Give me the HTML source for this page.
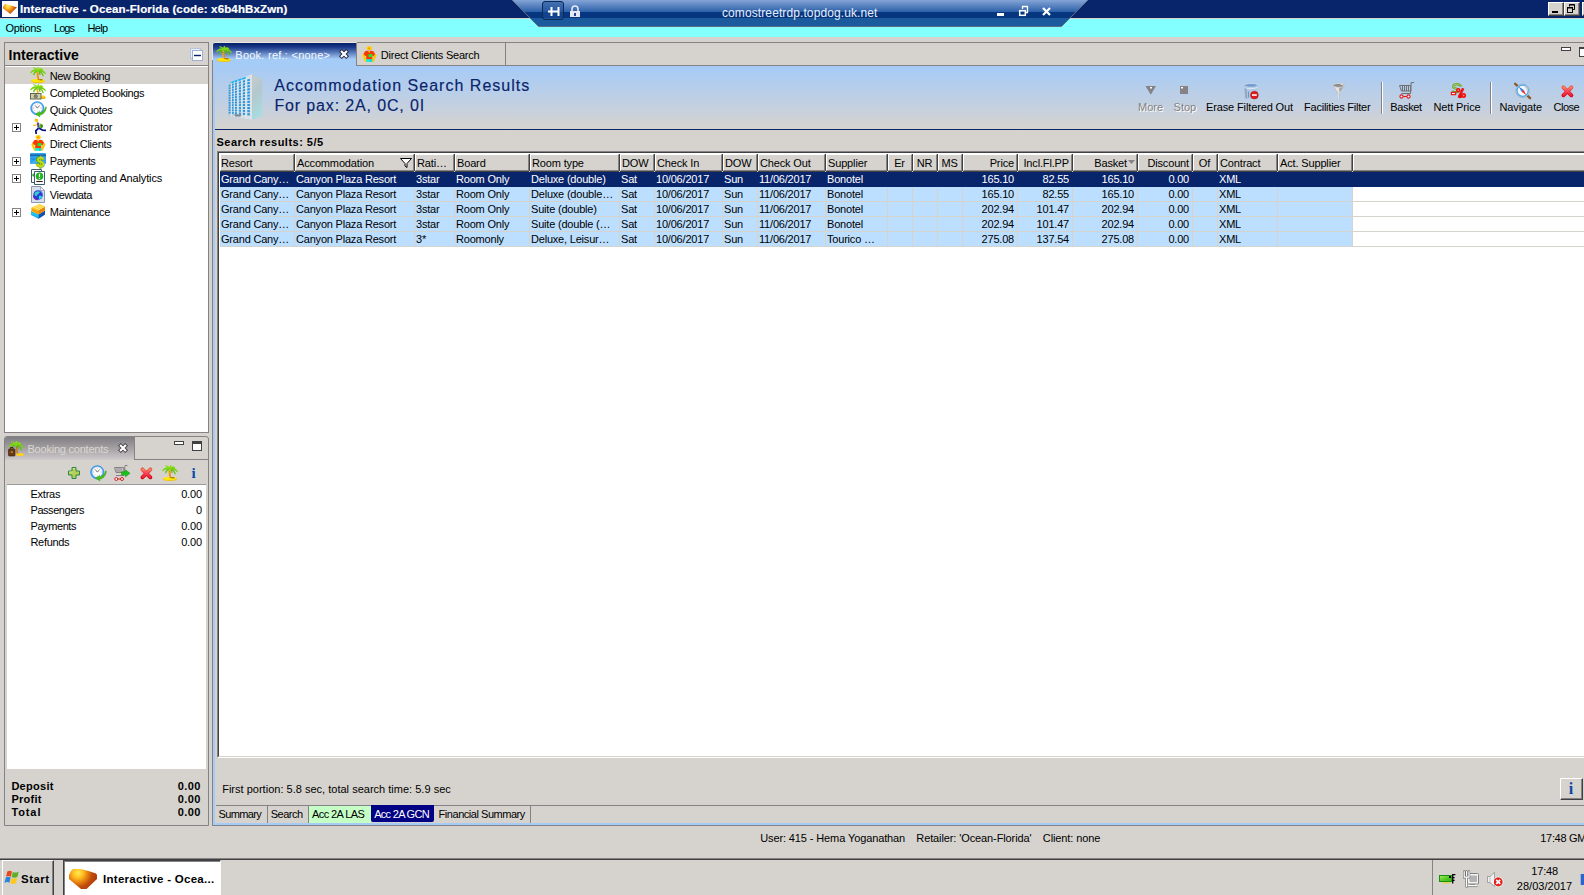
<!DOCTYPE html>
<html><head><meta charset="utf-8"><title>Interactive - Ocean-Florida</title>
<style>
*{box-sizing:border-box;margin:0;padding:0}
html,body{width:1584px;height:895px;overflow:hidden}
body{background:#D6D3CE;font:11px "Liberation Sans",sans-serif;color:#000;position:relative}
.a{position:absolute;white-space:pre}
.t{position:absolute;white-space:pre;line-height:13px;height:13px;letter-spacing:-0.15px}
.b{font-weight:bold}
svg{position:absolute;overflow:visible}
#title{left:0;top:0;width:1584px;height:18px;background:#08246B}
#menu{left:0;top:18px;width:1584px;height:19px;background:#84FFFF}
.wbtn{position:absolute;top:2px;width:16px;height:14px;background:#D6D3CE;border:1px solid;border-color:#fff #424142 #424142 #fff;box-shadow:inset -1px -1px 0 #848284}
.panel{position:absolute;border:1px solid #848284}
.hdr{position:absolute;top:154px;height:17px;background:#D6D3CE;border:1px solid;border-color:#fff #848284 #848284 #fff;box-shadow:1px 0 0 #424142, 0 1px 0 #424142;line-height:17px;padding:0 2px 0 1px;white-space:pre;overflow:hidden;letter-spacing:-0.15px}
.r{text-align:right}
.row{position:absolute;left:220px;height:15px;width:1133px;background:#BDDFFF}
.row span{position:absolute;top:0;height:15px;line-height:15px;white-space:pre;overflow:hidden;letter-spacing:-0.2px;border-right:1px solid #D6D3CE;border-bottom:1px solid #D6D3CE;padding:0 3px 0 1px}
.sel{background:#08246B;color:#fff;width:1364px}
.sel span{border-color:transparent}
</style></head><body>
<!-- ===== title bar ===== -->
<div id="title" class="a"></div>
<div id="menu" class="a"></div>
<div class="a" style="left:2px;top:1px;width:16px;height:16px;background:#fff"></div>
<svg style="left:2px;top:2px" width="16" height="14" viewBox="0 0 16 14"><defs><radialGradient id="lg1" cx="6" cy="4" r="9" gradientUnits="userSpaceOnUse"><stop offset="0" stop-color="#FFEC70"/><stop offset=".3" stop-color="#FFC028"/><stop offset=".6" stop-color="#E07C10"/><stop offset="1" stop-color="#B03C0C"/></radialGradient></defs><path d="M1 4.800L3 2L7 3L14.900 5.300L8.300 11.900L1.100 6.600Z" fill="url(#lg1)"/></svg>
<div class="wbtn" style="left:1548px"></div><div class="a" style="left:1552px;top:11px;width:6px;height:2px;background:#000"></div>
<div class="wbtn" style="left:1564px"></div><svg style="left:1567px;top:4px" width="9" height="10"><path d="M2.500 2.500V.5H7.500V5.500H6" fill="none" stroke="#000"/><path d="M2 1H8" stroke="#000" stroke-width="1"/><rect x=".5" y="3.500" width="5" height="5" fill="none" stroke="#000"/><path d="M0 4H6" stroke="#000" stroke-width="1"/></svg>
<div class="wbtn" style="left:1582px"></div>
<div class="a" style="left:0;top:18px;width:1584px;height:1px;background:#D6D3CE"></div>
<!-- ===== RDP connection bar ===== -->
<svg style="left:510px;top:0" width="580" height="28" viewBox="510 0 580 28">
<defs><linearGradient id="cb" x1="0" y1="0" x2="0" y2="1">
<stop offset="0" stop-color="#84A4D6"/><stop offset=".44" stop-color="#2E62AA"/><stop offset=".45" stop-color="#06367F"/><stop offset=".68" stop-color="#06367F"/><stop offset=".69" stop-color="#1B5A9C"/><stop offset="1" stop-color="#1B5A9C"/></linearGradient></defs>
<path d="M512 0 L1088 0 L1061.500 26.500 L538.500 26.500 Z" fill="url(#cb)"/>
<path d="M512 0 L538.500 26.500 L1061.500 26.500 L1088 0" fill="none" stroke="#5E6E84" stroke-width="1"/>
<rect x="542.5" y="1.5" width="21" height="18" rx="2.5" fill="#1D4F97" fill-opacity=".55" stroke="#0B2A55"/>
<path d="M548 11.5 H558 M551.5 7 V16 M558.5 7 V16" stroke="#fff" stroke-width="2" fill="none"/>
<path d="M572 11 V9 a3 3 0 0 1 6 0 V11" fill="none" stroke="#E8E8F4" stroke-width="1.6"/>
<rect x="570" y="11" width="10" height="6" fill="#E8E8F4"/><rect x="574" y="13" width="2" height="3" fill="#1B4A90"/>
<rect x="997" y="13" width="7" height="3" fill="#fff"/>
<path d="M1022.5 9 V6.500 H1027.5 V12.500 H1025" fill="none" stroke="#fff" stroke-width="1.3"/>
<rect x="1019.7" y="10.700" width="5.600" height="4.600" fill="none" stroke="#fff" stroke-width="1.500"/>
<path d="M1043 8 L1050 15 M1050 8 L1043 15" stroke="#fff" stroke-width="2.2" fill="none"/>
</svg>
<!-- ===== left top panel ===== -->
<div class="panel" style="left:4px;top:42px;width:205px;height:391px;background:#fff"></div>
<div class="a" style="left:5px;top:43px;width:203px;height:23px;background:#D6D3CE;border-bottom:1px solid #848284"></div>
<div class="a" style="left:5px;top:66px;width:203px;height:1px;background:#fff"></div>
<div class="a" style="left:5px;top:67px;width:203px;height:17px;background:#D6D3CE"></div>
<svg style="left:190px;top:48px" width="14" height="14"><rect x=".5" y=".5" width="10" height="10" fill="#E8EEF8" stroke="#B8C4DC"/><rect x="2.500" y="2.500" width="10" height="10" fill="#fff" stroke="#9CB0D0"/><path d="M4 7.500H11" stroke="#08246B" stroke-width="1.4"/></svg>
<svg style="left:12px;top:123px" width="9" height="9"><rect x=".5" y=".5" width="8" height="8" fill="#fff" stroke="#848284"/><path d="M2 4.500H7M4.500 2V7" stroke="#000"/></svg>
<svg style="left:12px;top:157px" width="9" height="9"><rect x=".5" y=".5" width="8" height="8" fill="#fff" stroke="#848284"/><path d="M2 4.500H7M4.500 2V7" stroke="#000"/></svg>
<svg style="left:12px;top:174px" width="9" height="9"><rect x=".5" y=".5" width="8" height="8" fill="#fff" stroke="#848284"/><path d="M2 4.500H7M4.500 2V7" stroke="#000"/></svg>
<svg style="left:12px;top:208px" width="9" height="9"><rect x=".5" y=".5" width="8" height="8" fill="#fff" stroke="#848284"/><path d="M2 4.500H7M4.500 2V7" stroke="#000"/></svg>
<!-- ===== booking contents panel ===== -->
<div class="panel" style="left:4px;top:436px;width:205px;height:390px;border-radius:3px 3px 0 0"></div>
<div class="a" style="left:5px;top:437px;width:130px;height:23px;border-radius:2px 0 0 0;background:linear-gradient(#7E7E82 0,#8E8C90 20%,#A8A4A8 55%,#C6C2C4 90%,#D0CCCC 100%);border-right:1px solid #848284"></div>
<div class="a" style="left:135px;top:459px;width:73px;height:1px;background:#848284"></div>
<svg style="left:118px;top:443px" width="10" height="10"><path d="M2.800 2.800L7.200 7.200M7.200 2.800L2.800 7.200" stroke="#424142" stroke-width="4" stroke-linecap="square"/><path d="M2.800 2.800L7.200 7.200M7.200 2.800L2.800 7.200" stroke="#fff" stroke-width="2.200" stroke-linecap="square"/></svg>
<svg style="left:174px;top:441px" width="30" height="12"><rect x=".5" y=".5" width="9" height="3" fill="#fff" stroke="#424142"/><rect x="18.500" y=".5" width="9" height="9" fill="#fff" stroke="#424142"/><path d="M18 2H28" stroke="#424142" stroke-width="2"/></svg>
<div class="a" style="left:7px;top:485px;width:199px;height:284px;background:#fff"></div>
<div class="a" style="left:5px;top:460px;width:2px;height:365px;background:#D6D3CE"></div>
<div class="a" style="left:7px;top:484px;width:199px;height:1px;background:#9C9A98"></div>
<!-- ===== main panel ===== -->
<div class="a" style="left:357px;top:42px;width:1227px;height:1px;background:#848284"></div>
<div class="a" style="left:212px;top:65px;width:1372px;height:1px;background:#848284"></div>
<div class="a" style="left:212px;top:60px;width:1px;height:766px;background:#848284"></div>
<div class="a" style="left:212px;top:825px;width:1372px;height:1px;background:#848284"></div>
<div class="a" style="left:213px;top:60px;width:2px;height:765px;background:#A5CBF7"></div>
<div class="a" style="left:213px;top:823px;width:1371px;height:2px;background:#A5CBF7"></div>
<!-- tabs -->
<div class="a" style="left:213px;top:43px;width:143px;height:23px;border-radius:2px 0 0 0;background:linear-gradient(#062068 0,#1C3A8A 18%,#A5CBF7 70%)"></div>
<div class="a" style="left:214px;top:42px;width:142px;height:1px;background:#E9E7E3"></div>
<div class="a" style="left:212px;top:44px;width:1px;height:16px;background:#E9E7E3"></div>
<div class="a" style="left:356px;top:43px;width:1px;height:22px;background:#848284"></div>
<div class="a" style="left:505px;top:43px;width:1px;height:22px;background:#848284"></div>
<svg style="left:339px;top:49px" width="10" height="10"><path d="M2.800 2.800L7.200 7.200M7.200 2.800L2.800 7.200" stroke="#202840" stroke-width="4" stroke-linecap="square"/><path d="M2.800 2.800L7.200 7.200M7.200 2.800L2.800 7.200" stroke="#fff" stroke-width="2.200" stroke-linecap="square"/></svg>
<svg style="left:1561px;top:47px" width="23" height="12"><rect x=".5" y=".5" width="9" height="3" fill="#fff" stroke="#424142"/><rect x="18.500" y=".5" width="9" height="9" fill="#fff" stroke="#424142"/><path d="M18 1.500H28" stroke="#424142"/></svg>
<!-- gradient header -->
<div class="a" style="left:215px;top:66px;width:1369px;height:63px;background:linear-gradient(#A5CBF7 0,#AECCF0 18%,#C2D0E2 60%,#D6D3CE 100%)"></div>
<div class="a" style="left:215px;top:129px;width:1369px;height:1px;background:#08246B"></div>
<!-- grid -->
<div class="a" style="left:217px;top:151px;width:1400px;height:607px;background:#fff;border:1px solid;border-color:#848284 #fff #fff #848284"></div>
<div class="a" style="left:218px;top:152px;width:1400px;height:605px;border:1px solid;border-color:#424142 #D6D3CE #D6D3CE #424142"></div>
<div class="a" style="left:220px;top:154px;width:1364px;height:18px;background:#D6D3CE"></div>
<div class="a" style="left:1560px;top:778px;width:23px;height:22px;background:#D6D3CE;border:1px solid;border-color:#fff #424142 #424142 #fff;box-shadow:inset -1px -1px 0 #848284"></div>
<div class="a b" style="left:1568.700px;top:779px;font:bold 16px/19px 'Liberation Serif',serif;color:#0848A8">i</div>
<!-- bottom tabs -->
<div class="a" style="left:216px;top:805px;width:1368px;height:1px;background:#848284"></div>
<div class="a" style="left:267px;top:806px;width:1px;height:17px;background:#848284"></div>
<div class="a" style="left:308px;top:806px;width:1px;height:17px;background:#848284"></div>
<div class="a" style="left:309px;top:806px;width:62px;height:17px;background:#C6FFC6"></div>
<div class="a" style="left:371px;top:805px;width:63px;height:17px;background:#000084;border-radius:0 0 2px 2px"></div>
<div class="a" style="left:530px;top:806px;width:1px;height:17px;background:#848284"></div>
<!-- status -->
<!-- taskbar -->
<div class="a" style="left:0;top:858px;width:1584px;height:1px;background:#848284"></div>
<div class="a" style="left:0;top:859px;width:1584px;height:1px;background:#424142"></div>
<div class="a" style="left:2px;top:860px;width:52px;height:40px;border:1px solid;border-color:#fff #424142 #424142 #fff;box-shadow:inset -1px 0 0 #848284"></div>
<div class="a" style="left:63px;top:860px;width:158px;height:40px;background:#fff;border:1px solid;border-color:#424142 #fff #fff #424142;box-shadow:inset 1px 1px 0 #848284"></div>
<div class="a" style="left:1432px;top:860px;width:1px;height:35px;background:#848284"></div>
<!-- ===== table ===== -->
<div class="hdr" style="left:220px;width:74px;padding-left:0">Resort</div>
<div class="hdr" style="left:295px;width:119px">Accommodation</div>
<div class="hdr" style="left:415px;width:39px">Rati…</div>
<div class="hdr" style="left:455px;width:74px">Board</div>
<div class="hdr" style="left:530px;width:89px">Room type</div>
<div class="hdr" style="left:620px;width:34px">DOW</div>
<div class="hdr" style="left:655px;width:67px">Check In</div>
<div class="hdr" style="left:723px;width:34px">DOW</div>
<div class="hdr" style="left:758px;width:67px">Check Out</div>
<div class="hdr" style="left:826px;width:61px">Supplier</div>
<div class="hdr" style="left:888px;width:24px;text-align:center">Er</div>
<div class="hdr" style="left:913px;width:24px;text-align:center">NR</div>
<div class="hdr" style="left:938px;width:24px;text-align:center">MS</div>
<div class="hdr" style="left:963px;width:54px;text-align:right">Price</div>
<div class="hdr" style="left:1018px;width:54px;text-align:right">Incl.Fl.PP</div>
<div class="hdr" style="left:1073px;width:64px;text-align:right;padding-right:9px">Basket</div>
<div class="hdr" style="left:1138px;width:54px;text-align:right">Discount</div>
<div class="hdr" style="left:1193px;width:24px;text-align:center">Of</div>
<div class="hdr" style="left:1218px;width:59px">Contract</div>
<div class="hdr" style="left:1278px;width:74px">Act. Supplier</div>
<div class="hdr" style="left:1353px;width:300px"></div>
<svg style="left:399px;top:157px" width="14" height="12"><path d="M1.500 1.500H12.500L8 6.500V10.500L6 9V6.500Z" fill="#fff" stroke="#000" stroke-width="1"/></svg>
<svg style="left:1128px;top:160px" width="7" height="4"><path d="M0 0H7L3.500 4Z" fill="#848284"/></svg>
<div class="row sel" style="top:172px"><span style="left:0px;width:75px">Grand Cany…</span><span style="left:75px;width:120px">Canyon Plaza Resort</span><span style="left:195px;width:40px">3star</span><span style="left:235px;width:75px">Room Only</span><span style="left:310px;width:90px">Deluxe (double)</span><span style="left:400px;width:35px">Sat</span><span style="left:435px;width:68px">10/06/2017</span><span style="left:503px;width:35px">Sun</span><span style="left:538px;width:68px">11/06/2017</span><span style="left:606px;width:62px">Bonotel</span><span style="left:668px;width:25px"></span><span style="left:693px;width:25px"></span><span style="left:718px;width:25px"></span><span style="left:743px;width:55px;text-align:right">165.10</span><span style="left:798px;width:55px;text-align:right">82.55</span><span style="left:853px;width:65px;text-align:right">165.10</span><span style="left:918px;width:55px;text-align:right">0.00</span><span style="left:973px;width:25px"></span><span style="left:998px;width:60px">XML</span><span style="left:1058px;width:75px"></span></div>
<div class="row" style="top:187px"><span style="left:0px;width:75px">Grand Cany…</span><span style="left:75px;width:120px">Canyon Plaza Resort</span><span style="left:195px;width:40px">3star</span><span style="left:235px;width:75px">Room Only</span><span style="left:310px;width:90px">Deluxe (double…</span><span style="left:400px;width:35px">Sat</span><span style="left:435px;width:68px">10/06/2017</span><span style="left:503px;width:35px">Sun</span><span style="left:538px;width:68px">11/06/2017</span><span style="left:606px;width:62px">Bonotel</span><span style="left:668px;width:25px"></span><span style="left:693px;width:25px"></span><span style="left:718px;width:25px"></span><span style="left:743px;width:55px;text-align:right">165.10</span><span style="left:798px;width:55px;text-align:right">82.55</span><span style="left:853px;width:65px;text-align:right">165.10</span><span style="left:918px;width:55px;text-align:right">0.00</span><span style="left:973px;width:25px"></span><span style="left:998px;width:60px">XML</span><span style="left:1058px;width:75px"></span></div>
<div class="a" style="left:1353px;top:201px;width:231px;height:1px;background:#D6D3CE"></div>
<div class="row" style="top:202px"><span style="left:0px;width:75px">Grand Cany…</span><span style="left:75px;width:120px">Canyon Plaza Resort</span><span style="left:195px;width:40px">3star</span><span style="left:235px;width:75px">Room Only</span><span style="left:310px;width:90px">Suite (double)</span><span style="left:400px;width:35px">Sat</span><span style="left:435px;width:68px">10/06/2017</span><span style="left:503px;width:35px">Sun</span><span style="left:538px;width:68px">11/06/2017</span><span style="left:606px;width:62px">Bonotel</span><span style="left:668px;width:25px"></span><span style="left:693px;width:25px"></span><span style="left:718px;width:25px"></span><span style="left:743px;width:55px;text-align:right">202.94</span><span style="left:798px;width:55px;text-align:right">101.47</span><span style="left:853px;width:65px;text-align:right">202.94</span><span style="left:918px;width:55px;text-align:right">0.00</span><span style="left:973px;width:25px"></span><span style="left:998px;width:60px">XML</span><span style="left:1058px;width:75px"></span></div>
<div class="a" style="left:1353px;top:216px;width:231px;height:1px;background:#D6D3CE"></div>
<div class="row" style="top:217px"><span style="left:0px;width:75px">Grand Cany…</span><span style="left:75px;width:120px">Canyon Plaza Resort</span><span style="left:195px;width:40px">3star</span><span style="left:235px;width:75px">Room Only</span><span style="left:310px;width:90px">Suite (double (…</span><span style="left:400px;width:35px">Sat</span><span style="left:435px;width:68px">10/06/2017</span><span style="left:503px;width:35px">Sun</span><span style="left:538px;width:68px">11/06/2017</span><span style="left:606px;width:62px">Bonotel</span><span style="left:668px;width:25px"></span><span style="left:693px;width:25px"></span><span style="left:718px;width:25px"></span><span style="left:743px;width:55px;text-align:right">202.94</span><span style="left:798px;width:55px;text-align:right">101.47</span><span style="left:853px;width:65px;text-align:right">202.94</span><span style="left:918px;width:55px;text-align:right">0.00</span><span style="left:973px;width:25px"></span><span style="left:998px;width:60px">XML</span><span style="left:1058px;width:75px"></span></div>
<div class="a" style="left:1353px;top:231px;width:231px;height:1px;background:#D6D3CE"></div>
<div class="row" style="top:232px"><span style="left:0px;width:75px">Grand Cany…</span><span style="left:75px;width:120px">Canyon Plaza Resort</span><span style="left:195px;width:40px">3*</span><span style="left:235px;width:75px">Roomonly</span><span style="left:310px;width:90px">Deluxe, Leisur…</span><span style="left:400px;width:35px">Sat</span><span style="left:435px;width:68px">10/06/2017</span><span style="left:503px;width:35px">Sun</span><span style="left:538px;width:68px">11/06/2017</span><span style="left:606px;width:62px">Tourico …</span><span style="left:668px;width:25px"></span><span style="left:693px;width:25px"></span><span style="left:718px;width:25px"></span><span style="left:743px;width:55px;text-align:right">275.08</span><span style="left:798px;width:55px;text-align:right">137.54</span><span style="left:853px;width:65px;text-align:right">275.08</span><span style="left:918px;width:55px;text-align:right">0.00</span><span style="left:973px;width:25px"></span><span style="left:998px;width:60px">XML</span><span style="left:1058px;width:75px"></span></div>
<div class="a" style="left:1353px;top:246px;width:231px;height:1px;background:#D6D3CE"></div>
<!-- ===== icons ===== -->
<svg style="left:30px;top:67px" width="16" height="16" viewBox="0 0 16 16"><ellipse cx="8" cy="14.300" rx="7" ry="1.700" fill="#F0C400"/><ellipse cx="7.800" cy="13.500" rx="6.600" ry="1.600" fill="#FFE808"/><path d="M7.500 4.500C7 7.500 7.600 10.500 8.500 13.200" stroke="#F4B81C" stroke-width="2" fill="none"/><path d="M7 6.500l1.600.6M7.200 8.600l1.600.5M7.500 10.600l1.600.4M8 12.400l1.400.2" stroke="#D06410" stroke-width=".9"/><rect x="9.500" y="12.400" width="3" height=".9" fill="#6C4408"/><path d="M7.500 3C5 1.200 2 2.500 .2 5.600L1 6.400C2.800 4.400 5 3.900 7.500 4.600Z" fill="#78D40C"/><path d="M7.200 3.800C5 3.800 3.400 5.500 3 8.300L4.300 8.300C4.700 6.500 5.800 5.400 7.400 5Z" fill="#64C408"/><path d="M7.800 3C6.800 1 5 0 3.200 .2L3.400 1.300C5 1.400 6 2.200 7 3.600Z" fill="#84DC10"/><path d="M7.200 3C7 1.500 7.600 .4 8.600 0L9.500 .8C8.800 1.600 8.600 2.400 8.800 3.200Z" fill="#8CE414"/><path d="M8.500 2.600C10 .8 12 1 13.200 2.600L12.400 3.500C11.200 2.700 10 2.800 8.800 3.800Z" fill="#84DC10"/><path d="M8.800 3C11.500 2.200 14.500 3.600 16 6.500L15.100 7.200C13.600 5 11.400 4.300 8.800 4.500Z" fill="#74D00C"/><path d="M9 4C11.400 4 13.200 6 13.800 9.300L12.500 9.300C12.200 7 11 5.600 9 5.200Z" fill="#60C008"/><path d="M8.600 4.200C9.800 5 10.600 6.400 10.600 8L9.500 8C9.400 6.600 9 5.600 8.200 5Z" fill="#54B404"/><path d="M6.500 2.200C7.500 2.600 8.500 2.600 9.500 2.200L9.500 4.600H6.500Z" fill="#7CD810"/></svg>
<svg style="left:30px;top:84px" width="16" height="16" viewBox="0 0 16 16"><path d="M7.500 4.500C7.200 6.500 7.500 8.500 8.200 10.500" stroke="#F4B81C" stroke-width="1.800" fill="none"/><path d="M7.500 3C5 1.200 2 2.500 .2 5.600L1 6.400C2.800 4.400 5 3.900 7.500 4.600Z" fill="#78D40C"/><path d="M7.200 3.800C5 3.800 3.400 5.500 3 8.300L4.300 8.300C4.700 6.500 5.800 5.400 7.400 5Z" fill="#64C408"/><path d="M7.800 3C6.800 1 5 0 3.200 .2L3.400 1.300C5 1.400 6 2.200 7 3.600Z" fill="#84DC10"/><path d="M7.200 3C7 1.500 7.600 .4 8.600 0L9.500 .8C8.800 1.600 8.600 2.400 8.800 3.200Z" fill="#8CE414"/><path d="M8.500 2.600C10 .8 12 1 13.200 2.600L12.400 3.500C11.200 2.700 10 2.800 8.800 3.800Z" fill="#84DC10"/><path d="M8.800 3C11.500 2.200 14.500 3.600 16 6.500L15.100 7.200C13.600 5 11.400 4.300 8.800 4.500Z" fill="#74D00C"/><path d="M9 4C11.400 4 13.200 6 13.800 9.300L12.500 9.300C12.200 7 11 5.600 9 5.200Z" fill="#60C008"/><path d="M8.600 4.200C9.800 5 10.600 6.400 10.600 8L9.500 8C9.400 6.600 9 5.600 8.200 5Z" fill="#54B404"/><path d="M6.500 2.200C7.500 2.600 8.500 2.600 9.500 2.200L9.500 4.600H6.500Z" fill="#7CD810"/><ellipse cx="13" cy="13.800" rx="2.800" ry="1.200" fill="#E6AE00"/><ellipse cx="12.800" cy="12.600" rx="2.600" ry="1.100" fill="#FFD21A"/><rect x=".5" y="9.500" width="10.500" height="5.500" fill="#CFCFAE" stroke="#64644C"/><circle cx="5.700" cy="12.300" r="1.700" fill="#8A8A6C" stroke="#55553C" stroke-width=".6"/></svg>
<svg style="left:30px;top:101px" width="16" height="16" viewBox="0 0 16 16"><circle cx="7.300" cy="7.300" r="6.700" fill="#3CA0F4"/><circle cx="7.300" cy="7.300" r="6.700" fill="none" stroke="#2484E0" stroke-width=".5"/><circle cx="7.300" cy="7" r="5.200" fill="#fff" stroke="#B4C8DC" stroke-width=".5"/><path d="M7.300 7L5.300 4.600M7.300 7L9.600 4.800" stroke="#404040" stroke-width=".8" fill="none"/><path d="M3.200 7h.9M10.600 7h.9M7.300 2.800v.7M7.300 10.600v.7M4.500 4.200l.4.400M10.100 4.200l-.4.400M4.500 9.800l.4-.4M10.100 9.800l-.4-.4" stroke="#707070" stroke-width=".7"/><path d="M11.500 11.200C13.500 10 15.200 8.200 15.600 5.800L16.400 6.200C16.200 10.500 13 13.800 9.600 14.200L10 16L5.600 13.200L9.600 10.400L9.800 12C10.400 11.900 11 11.600 11.500 11.200Z" fill="#48C018" stroke="#2C9A0C" stroke-width=".4"/></svg>
<svg style="left:30px;top:118px" width="16" height="16" viewBox="0 0 16 16"><ellipse cx="6.400" cy="2.500" rx="1.800" ry="1.700" fill="#FFCC18"/><path d="M5 1.200L7.800 2.200" stroke="#F0B000" stroke-width="1"/><path d="M6.800 4.200L9 4.800L10 10L7.400 9.600Z" fill="#4A50A8"/><path d="M9.600 4.800L11 5.400L11.200 9L10 9.200Z" fill="#FFC820"/><path d="M10.600 6L12.600 6.600L13 8.600L11.800 10.200L9.600 10Z" fill="#2C9410"/><path d="M9.400 8L11 8.400L10.800 10L9.400 9.800Z" fill="#8CCC10"/><path d="M6.800 6.200L5.400 7.400L3 7.400" stroke="#FFC820" stroke-width="1.200" fill="none"/><path d="M8.600 10.200L5.800 12.800L6.200 16" stroke="#000C84" stroke-width="1.700" fill="none"/><path d="M9.200 10.200L12.600 12.200L16 12.400" stroke="#000C84" stroke-width="1.600" fill="none"/></svg>
<svg style="left:31px;top:135px" width="16" height="16" viewBox="0 0 16 16"><ellipse cx="7.200" cy="2.200" rx="2.600" ry="2.100" fill="#FFD000"/><ellipse cx="7.200" cy="2.400" rx="1.300" ry=".8" fill="#FF9400"/><path d="M3.200 5.200C5 4.600 9.500 4.600 11.300 5.200L13.400 8.200L12 10.500L10.300 9.500V13.400H4.200V9.500L2.500 10.500L1.200 8.200Z" fill="#F83A04"/><circle cx="7.200" cy="5.600" r=".9" fill="#FFD000"/><path d="M1.500 9.500L3.800 14.800" stroke="#FFD000" stroke-width="2.300" stroke-linecap="round"/><path d="M13.200 9.500L10.800 14.800" stroke="#FFC400" stroke-width="2.300" stroke-linecap="round"/><rect x="6.500" y="8" width="3.800" height="3" fill="#2CE02C"/><rect x="4.200" y="13.200" width="6.100" height="2.600" fill="#08ECEC"/><path d="M8.800 13.200v2.600" stroke="#10B8A0" stroke-width=".7"/></svg>
<svg style="left:30px;top:152px" width="16" height="16" viewBox="0 0 16 16"><rect x="0" y="1" width="16" height="11" rx="1" fill="#30A4EC"/><rect x="0" y="2.400" width="16" height="1.800" fill="#1868B0"/><path d="M0 12L9 5V12Z" fill="#58B8F0" opacity=".55"/><rect x="1.300" y="6.600" width="3.500" height=".9" fill="#1C78C0"/><text x="6.400" y="15.300" font-family="Liberation Sans,sans-serif" font-weight="bold" font-size="14" fill="#6C9C08" stroke="#6C9C08" stroke-width="1">$</text><text x="6.400" y="15.300" font-family="Liberation Sans,sans-serif" font-weight="bold" font-size="14" fill="#C0E01C">$</text></svg>
<svg style="left:30px;top:169px" width="16" height="16" viewBox="0 0 16 16"><path d="M1.500 .5H11.500V13.500H1.500Z" fill="#fff" stroke="#3C5C70"/><circle cx="3.800" cy="6" r="1.600" fill="#22B422"/><path d="M4.500 2.500H14.500V15.500H4.500Z" fill="#fff" stroke="#3C5C70"/><circle cx="9.500" cy="7.200" r="3.500" fill="#1CBC1C" stroke="#0C8C0C" stroke-width=".5"/><path d="M9.500 4.800V8M9.500 9v1" stroke="#fff" stroke-width="1.200"/><path d="M6.300 12.500H12.700" stroke="#302020" stroke-width="1.100"/></svg>
<svg style="left:30px;top:186px" width="16" height="16" viewBox="0 0 16 16"><path d="M1.500 1.500H10.500L14.500 5.500V17.500H1.500Z" fill="#D8E0EE" stroke="#8C98B0" transform="translate(0,-1)"/><path d="M10.500 .5V4.500H14.500Z" fill="#F4F6FA" stroke="#8C98B0" stroke-width=".7"/><circle cx="8.100" cy="9" r="4.800" fill="#2C3CD0"/><path d="M4.500 7.500C5.500 5.200 8.500 4.600 10 6C9.500 7.800 7.200 8 6.600 10.200C5.400 10.200 4.300 9 4.500 7.500Z" fill="#34D0C8"/><path d="M8.800 10C10 9.300 11.800 9.800 12.200 11C11.500 12.400 10.200 13.200 9 13.200Z" fill="#20E0E8"/><path d="M10.500 5.500C12 6.500 12.800 8 12.800 9.500" stroke="#5C8CF0" stroke-width="1" fill="none"/><path d="M3.400 9.500A4.800 4.800 0 0 0 8 13.800" fill="none" stroke="#6C20B8" stroke-width="1.100"/></svg>
<svg style="left:30px;top:203px" width="16" height="16" viewBox="0 0 16 16"><path d="M1 8L10.500 5.500L15 7.500V11.500L8.500 15.800L1 12Z" fill="#20A8F0"/><path d="M8.500 11.500V15.800L15 11.500V7.500Z" fill="#1050B0"/><path d="M1 10.500L8.500 14L8.500 12.500L1 9Z" fill="#10E0F0" opacity=".8"/><path d="M1.500 4.500L9.500 1L15 3.500V7.500L8.500 11.500L1.500 8.500Z" fill="#FFC81C"/><path d="M8.500 7.500V11.500L15 7.500V3.500Z" fill="#F08C18"/><path d="M1.500 5.800L8.500 8.800L15 4.800M1.500 7.200L8.500 10.200L15 6.200" stroke="#E07808" stroke-width=".7" fill="none"/><path d="M3 4L10 6.500M5 3L12 5.500M7 2L14 4.500" stroke="#FFF0A0" stroke-width=".8" fill="none"/></svg>
<svg style="left:216px;top:46px" width="16" height="16" viewBox="0 0 16 16"><ellipse cx="8" cy="14.300" rx="7" ry="1.700" fill="#F0C400"/><ellipse cx="7.800" cy="13.500" rx="6.600" ry="1.600" fill="#FFE808"/><path d="M7.500 4.500C7 7.500 7.600 10.500 8.500 13.200" stroke="#F4B81C" stroke-width="2" fill="none"/><path d="M7 6.500l1.600.6M7.200 8.600l1.600.5M7.500 10.600l1.600.4M8 12.400l1.400.2" stroke="#D06410" stroke-width=".9"/><rect x="9.500" y="12.400" width="3" height=".9" fill="#6C4408"/><path d="M7.500 3C5 1.200 2 2.500 .2 5.600L1 6.400C2.800 4.400 5 3.900 7.500 4.600Z" fill="#78D40C"/><path d="M7.200 3.800C5 3.800 3.400 5.500 3 8.300L4.300 8.300C4.700 6.500 5.800 5.400 7.400 5Z" fill="#64C408"/><path d="M7.800 3C6.800 1 5 0 3.200 .2L3.400 1.300C5 1.400 6 2.200 7 3.600Z" fill="#84DC10"/><path d="M7.200 3C7 1.500 7.600 .4 8.600 0L9.500 .8C8.800 1.600 8.600 2.400 8.800 3.200Z" fill="#8CE414"/><path d="M8.500 2.600C10 .8 12 1 13.200 2.600L12.400 3.500C11.200 2.700 10 2.800 8.800 3.800Z" fill="#84DC10"/><path d="M8.800 3C11.500 2.200 14.500 3.600 16 6.500L15.100 7.200C13.600 5 11.400 4.300 8.800 4.500Z" fill="#74D00C"/><path d="M9 4C11.400 4 13.200 6 13.800 9.300L12.500 9.300C12.200 7 11 5.600 9 5.200Z" fill="#60C008"/><path d="M8.600 4.200C9.800 5 10.600 6.400 10.600 8L9.500 8C9.400 6.600 9 5.600 8.200 5Z" fill="#54B404"/><path d="M6.500 2.200C7.500 2.600 8.500 2.600 9.500 2.200L9.500 4.600H6.500Z" fill="#7CD810"/></svg>
<svg style="left:362px;top:46px" width="16" height="16" viewBox="0 0 16 16"><ellipse cx="7.200" cy="2.200" rx="2.600" ry="2.100" fill="#FFD000"/><ellipse cx="7.200" cy="2.400" rx="1.300" ry=".8" fill="#FF9400"/><path d="M3.200 5.200C5 4.600 9.500 4.600 11.300 5.200L13.400 8.200L12 10.500L10.300 9.500V13.400H4.200V9.500L2.500 10.500L1.200 8.200Z" fill="#F83A04"/><circle cx="7.200" cy="5.600" r=".9" fill="#FFD000"/><path d="M1.500 9.500L3.800 14.800" stroke="#FFD000" stroke-width="2.300" stroke-linecap="round"/><path d="M13.200 9.500L10.800 14.800" stroke="#FFC400" stroke-width="2.300" stroke-linecap="round"/><rect x="6.500" y="8" width="3.800" height="3" fill="#2CE02C"/><rect x="4.200" y="13.200" width="6.100" height="2.600" fill="#08ECEC"/><path d="M8.800 13.200v2.600" stroke="#10B8A0" stroke-width=".7"/></svg>
<svg style="left:0;top:0" width="300" height="130" viewBox="0 0 300 130"><defs><linearGradient id="bs" x1="0" y1="0" x2="0.3" y2="1"><stop offset="0" stop-color="#C4CCD0"/><stop offset=".5" stop-color="#B4C8CC"/><stop offset="1" stop-color="#A8DCE0"/></linearGradient><linearGradient id="bf" x1="0" y1="0" x2="1" y2="0"><stop offset="0" stop-color="#BCCAD6"/><stop offset="1" stop-color="#DCE4EA"/></linearGradient></defs><path d="M252.0 74.3L262.3 79.500V115.500L252.0 119.8Z" fill="url(#bs)"/><path d="M228.0 82.5L252.0 74.3V119.8L228.0 116.3Z" fill="url(#bf)"/><path d="M230.500 81.94583333333333L246 76.64999999999999V78.55L230.500 84.04583333333333Z" fill="#18B0F4"/><path d="M228.7 85.05L230.7 84.44V86.21L228.7 86.77Z" fill="#2496E4"/><path d="M228.7 87.47L230.7 86.93V88.70L228.7 89.20Z" fill="#2496E4"/><path d="M228.7 89.89L230.7 89.42V91.19L228.7 91.62Z" fill="#2496E4"/><path d="M228.7 92.31L230.7 91.91V93.68L228.7 94.04Z" fill="#2496E4"/><path d="M228.7 94.73L230.7 94.40V96.17L228.7 96.46Z" fill="#2496E4"/><path d="M228.7 97.15L230.7 96.89V98.66L228.7 98.88Z" fill="#2496E4"/><path d="M228.7 99.57L230.7 99.38V101.15L228.7 101.30Z" fill="#2496E4"/><path d="M228.7 101.99L230.7 101.88V103.64L228.7 103.72Z" fill="#2496E4"/><path d="M228.7 104.42L230.7 104.37V106.13L228.7 106.15Z" fill="#2496E4"/><path d="M228.7 106.84L230.7 106.86V108.62L228.7 108.57Z" fill="#2496E4"/><path d="M228.7 109.26L230.7 109.35V111.11L228.7 110.99Z" fill="#2496E4"/><path d="M228.7 111.68L230.7 111.84V113.60L228.7 113.41Z" fill="#2496E4"/><path d="M231.9 84.08L233.8 83.51V85.32L231.9 85.86Z" fill="#2496E4"/><path d="M231.9 86.61L233.8 86.10V87.92L231.9 88.40Z" fill="#2496E4"/><path d="M231.9 89.14L233.8 88.70V90.52L231.9 90.93Z" fill="#2496E4"/><path d="M231.9 91.68L233.8 91.30V93.12L231.9 93.46Z" fill="#2496E4"/><path d="M231.9 94.21L233.8 93.90V95.72L231.9 95.99Z" fill="#2496E4"/><path d="M231.9 96.74L233.8 96.49V98.31L231.9 98.52Z" fill="#2496E4"/><path d="M231.9 99.27L233.8 99.09V100.91L231.9 101.06Z" fill="#2496E4"/><path d="M231.9 101.80L233.8 101.69V103.51L231.9 103.59Z" fill="#2496E4"/><path d="M231.9 104.34L233.8 104.29V106.11L231.9 106.12Z" fill="#2496E4"/><path d="M231.9 106.87L233.8 106.88V108.70L231.9 108.65Z" fill="#2496E4"/><path d="M231.9 109.40L233.8 109.48V111.30L231.9 111.18Z" fill="#2496E4"/><path d="M231.9 111.93L233.8 112.08V113.90L231.9 113.72Z" fill="#2496E4"/><path d="M234.9 83.17L236.9 82.57V84.44L234.9 85.01Z" fill="#2496E4"/><path d="M234.9 85.81L236.9 85.27V87.15L234.9 87.65Z" fill="#2496E4"/><path d="M234.9 88.45L236.9 87.98V89.85L234.9 90.28Z" fill="#2496E4"/><path d="M234.9 91.08L236.9 90.68V92.56L234.9 92.92Z" fill="#2496E4"/><path d="M234.9 93.72L236.9 93.39V95.26L234.9 95.55Z" fill="#2496E4"/><path d="M234.9 96.35L236.9 96.09V97.97L234.9 98.19Z" fill="#2496E4"/><path d="M234.9 98.99L236.9 98.80V100.67L234.9 100.83Z" fill="#2496E4"/><path d="M234.9 101.62L236.9 101.50V103.38L234.9 103.46Z" fill="#2496E4"/><path d="M234.9 104.26L236.9 104.21V106.08L234.9 106.10Z" fill="#2496E4"/><path d="M234.9 106.90L236.9 106.91V108.79L234.9 108.73Z" fill="#2496E4"/><path d="M234.9 109.53L236.9 109.62V111.49L234.9 111.37Z" fill="#2496E4"/><path d="M234.9 112.17L236.9 112.32V114.20L234.9 114.00Z" fill="#2496E4"/><path d="M238.9 81.97L241.0 81.33V83.28L238.9 83.87Z" fill="#2496E4"/><path d="M238.9 84.74L241.0 84.18V86.12L238.9 86.65Z" fill="#2496E4"/><path d="M238.9 87.51L241.0 87.03V88.97L238.9 89.42Z" fill="#2496E4"/><path d="M238.9 90.29L241.0 89.87V91.82L238.9 92.20Z" fill="#2496E4"/><path d="M238.9 93.06L241.0 92.72V94.66L238.9 94.97Z" fill="#2496E4"/><path d="M238.9 95.84L241.0 95.57V97.51L238.9 97.74Z" fill="#2496E4"/><path d="M238.9 98.61L241.0 98.41V100.36L238.9 100.52Z" fill="#2496E4"/><path d="M238.9 101.38L241.0 101.26V103.20L238.9 103.29Z" fill="#2496E4"/><path d="M238.9 104.16L241.0 104.11V106.05L238.9 106.07Z" fill="#2496E4"/><path d="M238.9 106.93L241.0 106.95V108.90L238.9 108.84Z" fill="#2496E4"/><path d="M238.9 109.71L241.0 109.80V111.74L238.9 111.61Z" fill="#2496E4"/><path d="M238.9 112.48L241.0 112.64V114.59L238.9 114.39Z" fill="#2496E4"/><path d="M242.8 80.79L245.0 80.12V82.14L242.8 82.77Z" fill="#2496E4"/><path d="M242.8 83.70L245.0 83.11V85.12L242.8 85.67Z" fill="#2496E4"/><path d="M242.8 86.61L245.0 86.09V88.11L242.8 88.58Z" fill="#2496E4"/><path d="M242.8 89.52L245.0 89.08V91.09L242.8 91.49Z" fill="#2496E4"/><path d="M242.8 92.42L245.0 92.06V94.08L242.8 94.40Z" fill="#2496E4"/><path d="M242.8 95.33L245.0 95.05V97.06L242.8 97.31Z" fill="#2496E4"/><path d="M242.8 98.24L245.0 98.03V100.05L242.8 100.22Z" fill="#2496E4"/><path d="M242.8 101.15L245.0 101.02V103.03L242.8 103.13Z" fill="#2496E4"/><path d="M242.8 104.06L245.0 104.00V106.02L242.8 106.04Z" fill="#2496E4"/><path d="M242.8 106.97L245.0 106.99V109.00L242.8 108.94Z" fill="#2496E4"/><path d="M242.8 109.88L245.0 109.97V111.99L242.8 111.85Z" fill="#2496E4"/><path d="M242.8 112.79L245.0 112.96V114.97L242.8 114.76Z" fill="#2496E4"/><path d="M247.3 79.43L249.9 78.64V80.75L247.3 81.49Z" fill="#2496E4"/><path d="M247.3 82.49L249.9 81.80V83.90L247.3 84.55Z" fill="#2496E4"/><path d="M247.3 85.56L249.9 84.95V87.05L247.3 87.61Z" fill="#2496E4"/><path d="M247.3 88.62L249.9 88.11V90.21L247.3 90.68Z" fill="#2496E4"/><path d="M247.3 91.69L249.9 91.26V93.36L247.3 93.74Z" fill="#2496E4"/><path d="M247.3 94.75L249.9 94.42V96.52L247.3 96.81Z" fill="#2496E4"/><path d="M247.3 97.82L249.9 97.57V99.67L247.3 99.87Z" fill="#2496E4"/><path d="M247.3 100.88L249.9 100.73V102.83L247.3 102.94Z" fill="#2496E4"/><path d="M247.3 103.95L249.9 103.88V105.98L247.3 106.00Z" fill="#2496E4"/><path d="M247.3 107.01L249.9 107.03V109.14L247.3 109.07Z" fill="#2496E4"/><path d="M247.3 110.07L249.9 110.19V112.29L247.3 112.13Z" fill="#2496E4"/><path d="M247.3 113.14L249.9 113.34V115.44L247.3 115.19Z" fill="#2496E4"/><path d="M231.3 82.37V116.78" stroke="#E8EEF2" stroke-width=".8"/><path d="M234.3 81.35V117.22" stroke="#E8EEF2" stroke-width=".8"/><path d="M237.9 80.12V117.74" stroke="#E8EEF2" stroke-width=".8"/><path d="M241.9 78.75V118.33" stroke="#E8EEF2" stroke-width=".8"/><path d="M246.1 77.32V118.94" stroke="#E8EEF2" stroke-width=".8"/><path d="M233.800 114.300L241.800 114.600L240.300 116.600L235.500 116.400Z" fill="#7C8890"/></svg>
<!-- ===== toolbar ===== -->
<div class="a" style="left:1381px;top:82px;width:2px;height:32px;border-left:1px solid #848284;border-right:1px solid #fff"></div>
<div class="a" style="left:1490px;top:82px;width:2px;height:32px;border-left:1px solid #848284;border-right:1px solid #fff"></div>
<svg style="left:1145px;top:86px" width="12" height="9"><path d="M.5 0H11L5.800 8.800Z" fill="#848284"/><rect x="5" y="1" width="2" height="1.500" fill="#fff"/></svg>
<svg style="left:1180px;top:86px" width="8" height="8"><rect width="8" height="8" fill="#848284"/><rect x="1" y="1" width="2" height="1.500" fill="#fff"/></svg>
<svg style="left:1244px;top:83px" width="16" height="17" viewBox="0 0 16 17"><path d="M.3 2.500L1.200 15C1.200 16.300 12.800 16.300 12.800 15L13.700 2.500Z" fill="#B0C8E2"/><path d="M.3 2.500L1.200 15C1.800 15.600 2.600 15.800 3.200 15.900L2.600 3.500Z" fill="#90A8C4"/><path d="M4.500 8.500V14.500" stroke="#6C94C4" stroke-width="1.100"/><path d="M.5 4.500C3 6 11 6 13.500 4.500" stroke="#DCE8F4" stroke-width="1" fill="none"/><ellipse cx="7" cy="2.400" rx="6.600" ry="1.900" fill="#729CCC" stroke="#C8DCF0" stroke-width=".8"/><circle cx="10.400" cy="12.100" r="3.900" fill="#DC1C1C" stroke="#B01010" stroke-width=".5"/><rect x="8" y="11.200" width="4.800" height="1.600" fill="#fff"/></svg>
<svg style="left:1332px;top:83px" width="14" height="17" viewBox="0 0 14 17"><path d="M1.100 2.600L6.100 10.800V15.200L7.500 15.600V10.800L12.900 2.600Z" fill="#E4E4E4"/><path d="M7 4L7.500 10.800V15.600L7 15.400V10.800L12.900 2.600Z" fill="#A8A8A8"/><path d="M1.100 2.600L6.100 10.800" stroke="#B8B8B8" stroke-width=".8"/><ellipse cx="7" cy="2.400" rx="5.900" ry="1.900" fill="#8C8C8C" stroke="#D8D8D8" stroke-width=".8"/><path d="M8.500 1.200C10 1.400 11.500 2 12 2.800" stroke="#F4F4F4" stroke-width="1" fill="none"/></svg>
<svg style="left:1399px;top:82px" width="16" height="18" viewBox="0 0 16 18"><path d="M.5 3.500H11.500L12 9H2.500Z" fill="none" stroke="#707070" stroke-width="1"/><path d="M3.500 3.500V9M5.500 3.500V9M7.500 3.500V9M9.500 3.500V9" stroke="#707070" stroke-width="1"/><path d="M15 .5H12.200L11.500 11.500H2.500" fill="none" stroke="#707070" stroke-width="1"/><path d="M3.500 14.500H8.500" stroke="#E01818" stroke-width="1"/><circle cx="2.500" cy="14.500" r="1.600" fill="#fff" stroke="#E01818" stroke-width="1.100"/><circle cx="9.500" cy="14.500" r="1.600" fill="#fff" stroke="#E01818" stroke-width="1.100"/></svg>
<svg style="left:1450px;top:83px" width="17" height="16" viewBox="0 0 17 16"><path d="M11 3.500C10 .8 4.500 .3 3.200 3C2 5.800 8 5 8.500 7.500C8.800 9.500 4 10 2 8.200" fill="none" stroke="#6CA830" stroke-width="2.400"/><path d="M11 3.500C10 .8 4.500 .3 3.200 3C2 5.800 8 5 8.500 7.500" fill="none" stroke="#A8D070" stroke-width=".9"/><rect x=".8" y="8.800" width="5.400" height="3.400" fill="#EC1C1C"/><rect x="2" y="10" width="2.800" height="1" fill="#fff"/><circle cx="8.300" cy="7.300" r="2.300" fill="#F01414"/><circle cx="13.600" cy="12.600" r="2.500" fill="#F01414"/><path d="M13.200 5.200L8.800 14.800" stroke="#F01414" stroke-width="2.600"/><circle cx="10.200" cy="13.200" r="2" fill="#E41010"/><circle cx="8.300" cy="7.300" r=".8" fill="#F8A0A0"/><circle cx="13.600" cy="12.600" r=".8" fill="#F8A0A0"/></svg>
<svg style="left:1514px;top:82px" width="17" height="18" viewBox="0 0 17 18"><path d="M1.200 1.800L3.200 3.600M14 14.200L16 16.200" stroke="#8C5A28" stroke-width="2.400" stroke-linecap="round"/><circle cx="8.600" cy="8.800" r="6.800" fill="#D8E0E8" stroke="#90A4B8" stroke-width=".7"/><circle cx="8.600" cy="8.800" r="5.600" fill="#F4F6FA" stroke="#48A8EC" stroke-width="1.300"/><path d="M11 4.500A5 5 0 0 1 13.300 9" stroke="#C8D0D8" stroke-width="1.600" fill="none"/><path d="M4.800 4.800L9.800 8L7.600 9.800Z" fill="#2C7CE4"/><path d="M12.200 13L9.800 8L7.600 9.800Z" fill="#EC2828"/></svg>
<svg style="left:1561px;top:85px" width="13" height="13" viewBox="0 0 13 13"><defs><linearGradient id="xg1" x1="0" y1="0" x2="0" y2="1"><stop offset="0" stop-color="#E46040"/><stop offset=".5" stop-color="#E82838"/><stop offset="1" stop-color="#D40818"/></linearGradient><linearGradient id="xh1" x1="0" y1="0" x2="0" y2="1"><stop offset="0" stop-color="#FF8070"/><stop offset=".5" stop-color="#FA4458"/><stop offset="1" stop-color="#F02838"/></linearGradient></defs><path d="M2.400 2.300L10.400 10.300M10.400 2.300L2.400 10.300" stroke="url(#xg1)" stroke-width="3.800" stroke-linecap="round"/><path d="M2.600 2.500L10.200 10.100M10.200 2.500L2.600 10.100" stroke="url(#xh1)" stroke-width="2" stroke-linecap="round"/></svg>
<!-- ===== booking icons ===== -->
<svg style="left:8px;top:441px" width="16" height="16" viewBox="0 0 16 16"><ellipse cx="12" cy="13.500" rx="3.800" ry="1.500" fill="#FFD21A"/><path d="M9 5.500C8.400 8 8.600 10 9.500 12.500" stroke="#C87A1C" stroke-width="1.500" fill="none"/><path d="M7.500 3C5 1.200 2 2.500 .2 5.600L1 6.400C2.800 4.400 5 3.900 7.500 4.600Z" fill="#78D40C"/><path d="M7.200 3.800C5 3.800 3.400 5.500 3 8.300L4.300 8.300C4.700 6.500 5.800 5.400 7.400 5Z" fill="#64C408"/><path d="M7.800 3C6.800 1 5 0 3.200 .2L3.400 1.300C5 1.400 6 2.200 7 3.600Z" fill="#84DC10"/><path d="M7.200 3C7 1.500 7.600 .4 8.600 0L9.500 .8C8.800 1.600 8.600 2.400 8.800 3.200Z" fill="#8CE414"/><path d="M8.500 2.600C10 .8 12 1 13.200 2.600L12.400 3.500C11.200 2.700 10 2.800 8.800 3.800Z" fill="#84DC10"/><path d="M8.800 3C11.500 2.200 14.500 3.600 16 6.500L15.100 7.200C13.600 5 11.400 4.300 8.800 4.500Z" fill="#74D00C"/><path d="M9 4C11.400 4 13.200 6 13.800 9.300L12.500 9.300C12.200 7 11 5.600 9 5.200Z" fill="#60C008"/><path d="M8.600 4.200C9.800 5 10.600 6.400 10.600 8L9.500 8C9.400 6.600 9 5.600 8.200 5Z" fill="#54B404"/><path d="M6.500 2.200C7.500 2.600 8.500 2.600 9.500 2.200L9.500 4.600H6.500Z" fill="#7CD810"/><rect x=".5" y="8" width="6.500" height="7" rx=".8" fill="#6A3A14" stroke="#3C1C08" stroke-width=".6"/><path d="M2.500 8V6.500H5V8" fill="none" stroke="#3C1C08" stroke-width=".9"/><rect x="2.800" y="10.500" width="2" height="1.200" fill="#D8A838"/></svg>
<svg style="left:68px;top:467px" width="12" height="12"><path d="M4 .5H8V4H11.500V8H8V11.500H4V8H.5V4H4Z" fill="#B4D054" stroke="#2E8448" stroke-width="1"/><path d="M5 1.500H7M1.500 5H4.500" stroke="#DCE890" stroke-width="1"/></svg>
<svg style="left:90px;top:465px" width="16" height="16" viewBox="0 0 16 16"><circle cx="7.300" cy="7.300" r="6.700" fill="#3CA0F4"/><circle cx="7.300" cy="7.300" r="6.700" fill="none" stroke="#2484E0" stroke-width=".5"/><circle cx="7.300" cy="7" r="5.200" fill="#fff" stroke="#B4C8DC" stroke-width=".5"/><path d="M7.300 7L5.300 4.600M7.300 7L9.600 4.800" stroke="#404040" stroke-width=".8" fill="none"/><path d="M3.200 7h.9M10.600 7h.9M7.300 2.800v.7M7.300 10.600v.7M4.500 4.200l.4.400M10.100 4.200l-.4.400M4.500 9.800l.4-.4M10.100 9.800l-.4-.4" stroke="#707070" stroke-width=".7"/><path d="M11.500 11.200C13.500 10 15.200 8.200 15.600 5.800L16.400 6.200C16.200 10.500 13 13.800 9.600 14.200L10 16L5.600 13.200L9.600 10.400L9.800 12C10.400 11.900 11 11.600 11.500 11.200Z" fill="#48C018" stroke="#2C9A0C" stroke-width=".4"/></svg>
<svg style="left:114px;top:465px" width="17" height="17" viewBox="0 0 17 17"><path d="M.5 2.500H9.500L9 7.500H2Z" fill="none" stroke="#848284" stroke-width="1"/><path d="M3 2.500V7.500M5 2.500V7.500M7 2.500V7.500" stroke="#848284" stroke-width="1"/><path d="M13.500 .5H11L10 10.500H2" fill="none" stroke="#848284" stroke-width="1"/><path d="M7.500 6.800H11.500V4.800L16 8.300L11.500 11.800V9.800H7.500Z" fill="#18C418" stroke="#0C8C0C" stroke-width=".5"/><path d="M3 14H7" stroke="#E01818" stroke-width="1"/><circle cx="2.300" cy="14" r="1.500" fill="#fff" stroke="#E01818" stroke-width="1"/><circle cx="8" cy="14" r="1.500" fill="#fff" stroke="#E01818" stroke-width="1"/></svg>
<svg style="left:140px;top:467px" width="13" height="13" viewBox="0 0 13 13"><defs><linearGradient id="xg2" x1="0" y1="0" x2="0" y2="1"><stop offset="0" stop-color="#E46040"/><stop offset=".5" stop-color="#E82838"/><stop offset="1" stop-color="#D40818"/></linearGradient><linearGradient id="xh2" x1="0" y1="0" x2="0" y2="1"><stop offset="0" stop-color="#FF8070"/><stop offset=".5" stop-color="#FA4458"/><stop offset="1" stop-color="#F02838"/></linearGradient></defs><path d="M2.400 2.300L10.400 10.300M10.400 2.300L2.400 10.300" stroke="url(#xg2)" stroke-width="3.800" stroke-linecap="round"/><path d="M2.600 2.500L10.200 10.100M10.200 2.500L2.600 10.100" stroke="url(#xh2)" stroke-width="2" stroke-linecap="round"/></svg>
<svg style="left:162px;top:465px" width="16" height="16" viewBox="0 0 16 16"><ellipse cx="8" cy="14.300" rx="7" ry="1.700" fill="#F0C400"/><ellipse cx="7.800" cy="13.500" rx="6.600" ry="1.600" fill="#FFE808"/><path d="M7.500 4.500C7 7.500 7.600 10.500 8.500 13.200" stroke="#F4B81C" stroke-width="2" fill="none"/><path d="M7 6.500l1.600.6M7.200 8.600l1.600.5M7.500 10.600l1.600.4M8 12.400l1.400.2" stroke="#D06410" stroke-width=".9"/><rect x="9.500" y="12.400" width="3" height=".9" fill="#6C4408"/><path d="M7.500 3C5 1.200 2 2.500 .2 5.600L1 6.400C2.800 4.400 5 3.900 7.500 4.600Z" fill="#78D40C"/><path d="M7.200 3.800C5 3.800 3.400 5.500 3 8.300L4.300 8.300C4.700 6.500 5.800 5.400 7.400 5Z" fill="#64C408"/><path d="M7.800 3C6.800 1 5 0 3.200 .2L3.400 1.300C5 1.400 6 2.200 7 3.600Z" fill="#84DC10"/><path d="M7.200 3C7 1.500 7.600 .4 8.600 0L9.500 .8C8.800 1.600 8.600 2.400 8.800 3.200Z" fill="#8CE414"/><path d="M8.500 2.600C10 .8 12 1 13.200 2.600L12.400 3.500C11.200 2.700 10 2.800 8.800 3.800Z" fill="#84DC10"/><path d="M8.800 3C11.500 2.200 14.500 3.600 16 6.500L15.100 7.200C13.600 5 11.400 4.300 8.800 4.500Z" fill="#74D00C"/><path d="M9 4C11.400 4 13.200 6 13.800 9.300L12.500 9.300C12.200 7 11 5.600 9 5.200Z" fill="#60C008"/><path d="M8.600 4.200C9.800 5 10.600 6.400 10.600 8L9.500 8C9.400 6.600 9 5.600 8.200 5Z" fill="#54B404"/><path d="M6.500 2.200C7.500 2.600 8.500 2.600 9.500 2.200L9.500 4.600H6.500Z" fill="#7CD810"/></svg>
<div class="a" style="left:191.500px;top:463px;font:bold 15px/20px 'Liberation Serif',serif;color:#0848A8">i</div>
<!-- ===== taskbar icons ===== -->
<svg style="left:4px;top:870px" width="16" height="15" viewBox="0 0 16 15"><path d="M3.300 1.500C5 .4 6.500 .5 8 1.600L6.800 6.800C5.400 5.800 3.800 5.800 2 6.800Z" fill="#E8481C"/><path d="M8.800 1.900C10.500 3 12.500 2.800 14.800 1.400L13.500 6.800C11.500 8 9.500 8 7.600 7Z" fill="#5CB02C"/><path d="M1.800 7.600C3.500 6.500 5.200 6.600 6.600 7.600L5.400 12.800C4 11.800 2.200 11.800 .4 13Z" fill="#2C84E0"/><path d="M7.400 7.900C9.200 9 11.200 8.900 13.300 7.600L12 13C10 14.200 8 14.200 6.200 13.100Z" fill="#FFC81C"/></svg>
<svg style="left:69px;top:868px" width="29" height="22" viewBox="0 0 29 22"><defs><radialGradient id="gm" cx="9" cy="5" r="18" gradientUnits="userSpaceOnUse"><stop offset="0" stop-color="#FFEA58"/><stop offset=".28" stop-color="#FFC020"/><stop offset=".52" stop-color="#E88410"/><stop offset=".78" stop-color="#C04C0C"/><stop offset="1" stop-color="#B0400C"/></radialGradient></defs><path d="M4 1H11.500L19.500 3L27 5.500L28 7V11L17.500 21H12L0 11V7L2 3Z" fill="url(#gm)"/></svg>
<svg style="left:1434px;top:866px" width="76" height="26" viewBox="1434 866 76 26"><defs><linearGradient id="gc" x1="0" y1="0" x2="1" y2="1"><stop offset="0" stop-color="#A8F060"/><stop offset=".5" stop-color="#58CC28"/><stop offset="1" stop-color="#38B010"/></linearGradient></defs><rect x="1439.500" y="875.500" width="12.500" height="6" fill="url(#gc)" stroke="#189010" stroke-width="1"/><path d="M1443.500 882V883.400M1445.500 882V883.400M1447.500 882V883.400M1449.500 882V883.400" stroke="#E8D400" stroke-width="1.200"/><rect x="1449" y="876" width="2" height="2" fill="#000"/><path d="M1452.700 874V883.500M1452.700 874.600H1455.400M1452.700 877.600H1454.600M1452.700 880.400H1454.600" stroke="#000" stroke-width="1.300" fill="none"/><rect x="1467.500" y="873.500" width="11" height="10.500" rx="1" fill="#F4F4F4" stroke="#808080" stroke-width="1"/><rect x="1469.500" y="875.500" width="7.500" height="6.500" fill="#B4B2B4"/><path d="M1467.500 885.500H1477" stroke="#fff" stroke-width="1.400"/><path d="M1467 886.600H1477.500" stroke="#808080" stroke-width=".8"/><path d="M1470 884.500H1475" stroke="#808080" stroke-width=".8"/><path d="M1464.200 871.500V877.200H1469V871.500M1466.600 871.500V875.500M1466.600 877.200V886.500" stroke="#707070" stroke-width="2.400" fill="none" stroke-linecap="round"/><path d="M1464.200 871.500V877.200H1469V871.500M1466.600 871.500V875.500M1466.600 877.200V886.500" stroke="#fff" stroke-width="1.200" fill="none" stroke-linecap="round"/><path d="M1487.500 876.500H1490L1494.500 872.300V886.500L1490 882.500H1487.500Z" fill="#F0F0F0" stroke="#909090" stroke-width=".8"/><path d="M1490 876.500V882.500" stroke="#B0B0B0" stroke-width=".7"/><circle cx="1498.200" cy="881.900" r="4.900" fill="none" stroke="#fff" stroke-width=".8" stroke-dasharray="1.200 1"/><circle cx="1498.200" cy="881.900" r="4.300" fill="#E81C1C"/><path d="M1496.200 879.900L1500.200 883.900M1500.200 879.900L1496.200 883.900" stroke="#fff" stroke-width="1.700"/></svg>
<div class="a" style="left:1580px;top:874px;width:4px;height:11px;background:#2C64C8;border-left:1px solid #9CB4E0"></div>
<!-- ===== text ===== -->
<div class="t b" style="top:3px;left:20.00px;letter-spacing:0.147px;font-size:11.5px;color:#fff;-webkit-text-stroke:0.2px #fff">Interactive - Ocean-Florida (code: x6b4hBxZwn)</div>
<div class="t" style="top:22px;left:5.50px;letter-spacing:-0.318px">Options</div>
<div class="t" style="top:22px;left:54.00px;letter-spacing:-0.951px">Logs</div>
<div class="t" style="top:22px;left:87.50px;letter-spacing:-0.668px">Help</div>
<div class="t" style="top:7px;left:722.00px;letter-spacing:0.099px;font-size:12px;color:#E6EEFA">comostreetrdp.topdog.uk.net</div>
<div class="t b" style="top:47px;left:8.50px;letter-spacing:0.025px;font-size:14px;line-height:16px;height:16px">Interactive</div>
<div class="t" style="top:70px;left:49.80px;letter-spacing:-0.430px">New Booking</div>
<div class="t" style="top:87px;left:49.80px;letter-spacing:-0.400px">Completed Bookings</div>
<div class="t" style="top:104px;left:49.80px;letter-spacing:-0.340px">Quick Quotes</div>
<div class="t" style="top:121px;left:49.80px;letter-spacing:-0.178px">Administrator</div>
<div class="t" style="top:138px;left:49.80px;letter-spacing:-0.262px">Direct Clients</div>
<div class="t" style="top:155px;left:49.80px;letter-spacing:-0.416px">Payments</div>
<div class="t" style="top:172px;left:49.80px;letter-spacing:-0.140px">Reporting and Analytics</div>
<div class="t" style="top:189px;left:49.80px;letter-spacing:-0.348px">Viewdata</div>
<div class="t" style="top:206px;left:49.80px;letter-spacing:-0.247px">Maintenance</div>
<div class="t" style="top:443px;left:27.50px;letter-spacing:-0.226px;color:#DCD8D0">Booking contents</div>
<div class="t" style="top:488px;left:30.50px;letter-spacing:-0.235px">Extras</div>
<div class="t" style="top:488px;left:121.97px;width:80px;text-align:right;letter-spacing:-0.15px">0.00</div>
<div class="t" style="top:504px;left:30.50px;letter-spacing:-0.454px">Passengers</div>
<div class="t" style="top:504px;left:121.97px;width:80px;text-align:right;letter-spacing:-0.15px">0</div>
<div class="t" style="top:520px;left:30.50px;letter-spacing:-0.416px">Payments</div>
<div class="t" style="top:520px;left:121.97px;width:80px;text-align:right;letter-spacing:-0.15px">0.00</div>
<div class="t" style="top:536px;left:30.50px;letter-spacing:-0.328px">Refunds</div>
<div class="t" style="top:536px;left:121.97px;width:80px;text-align:right;letter-spacing:-0.15px">0.00</div>
<div class="t b" style="top:780px;left:11.40px;letter-spacing:0.288px">Deposit</div>
<div class="t b" style="top:780px;left:120.82px;width:80px;text-align:right;letter-spacing:0.4px">0.00</div>
<div class="t b" style="top:793px;left:11.40px;letter-spacing:0.249px">Profit</div>
<div class="t b" style="top:793px;left:120.82px;width:80px;text-align:right;letter-spacing:0.4px">0.00</div>
<div class="t b" style="top:806px;left:11.40px;letter-spacing:0.899px">Total</div>
<div class="t b" style="top:806px;left:120.82px;width:80px;text-align:right;letter-spacing:0.4px">0.00</div>
<div class="t" style="top:49px;left:235.30px;letter-spacing:0.248px;color:#F4F8FF">Book. ref.: &lt;none&gt;</div>
<div class="t" style="top:49px;left:380.80px;letter-spacing:-0.225px">Direct Clients Search</div>
<div class="t" style="top:76px;left:274.20px;letter-spacing:1.016px;font-size:16px;line-height:20px;height:20px;color:#08246B;-webkit-text-stroke:0.15px #08246B">Accommodation Search Results</div>
<div class="t" style="top:96px;left:274.40px;letter-spacing:0.859px;font-size:16px;line-height:20px;height:20px;color:#08246B;-webkit-text-stroke:0.15px #08246B">For pax: 2A, 0C, 0I</div>
<div class="t b" style="top:136px;left:216.50px;letter-spacing:0.488px">Search results: 5/5</div>
<div class="t" style="top:783px;left:222.20px;letter-spacing:0.011px">First portion: 5.8 sec, total search time: 5.9 sec</div>
<div class="t" style="top:808px;left:218.60px;letter-spacing:-0.660px">Summary</div>
<div class="t" style="top:808px;left:270.70px;letter-spacing:-0.487px">Search</div>
<div class="t" style="top:808px;left:312.00px;letter-spacing:-0.595px">Acc 2A LAS</div>
<div class="t" style="top:808px;left:374.20px;letter-spacing:-0.700px;color:#fff">Acc 2A GCN</div>
<div class="t" style="top:808px;left:438.60px;letter-spacing:-0.465px">Financial Summary</div>
<div class="t" style="top:832px;left:760.20px;letter-spacing:-0.114px">User: 415 - Hema Yoganathan</div>
<div class="t" style="top:832px;left:916.30px;letter-spacing:-0.109px">Retailer: 'Ocean-Florida'</div>
<div class="t" style="top:832px;left:1042.80px;letter-spacing:-0.108px">Client: none</div>
<div class="t" style="top:832px;left:1540.30px;letter-spacing:-0.325px">17:48 GMT</div>
<div class="t b" style="top:873px;left:21.00px;letter-spacing:0.457px;font-size:11.5px">Start</div>
<div class="t b" style="top:873px;left:103.00px;letter-spacing:0.286px;font-size:11.5px">Interactive - Ocea...</div>
<div class="t" style="top:865px;left:1531.30px;letter-spacing:-0.177px">17:48</div>
<div class="t" style="top:880px;left:1516.80px;letter-spacing:0.029px">28/03/2017</div>
<div class="t" style="top:102px;left:1139.00px;letter-spacing:0.019px;color:#fff">More</div>
<div class="t" style="top:101px;left:1138.00px;letter-spacing:0.019px;color:#848284">More</div>
<div class="t" style="top:102px;left:1174.60px;letter-spacing:-0.037px;color:#fff">Stop</div>
<div class="t" style="top:101px;left:1173.60px;letter-spacing:-0.037px;color:#848284">Stop</div>
<div class="t" style="top:101px;left:1206.00px;letter-spacing:-0.129px">Erase Filtered Out</div>
<div class="t" style="top:101px;left:1304.00px;letter-spacing:-0.226px">Facilities Filter</div>
<div class="t" style="top:101px;left:1390.30px;letter-spacing:-0.374px">Basket</div>
<div class="t" style="top:101px;left:1433.50px;letter-spacing:-0.130px">Nett Price</div>
<div class="t" style="top:101px;left:1499.50px;letter-spacing:-0.114px">Navigate</div>
<div class="t" style="top:101px;left:1553.50px;letter-spacing:-0.501px">Close</div>
</body></html>
